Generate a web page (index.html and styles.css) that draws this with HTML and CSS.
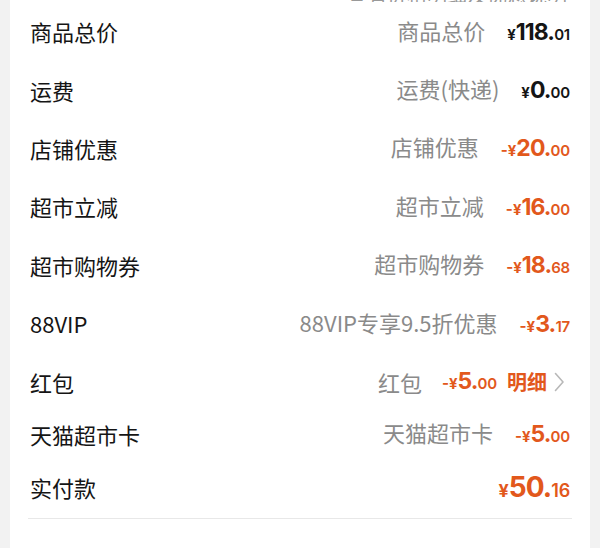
FILE: index.html
```html
<!DOCTYPE html>
<html lang="zh-CN">
<head>
<meta charset="utf-8">
<title>订单金额明细</title>
<link rel="stylesheet" href="styles.css">
</head>
<body>
<div class="card">
  <div class="prev"><span class="prev-text">查看价格明细及优惠说明</span></div>

  <div class="row">
    <span class="label">商品总价</span>
    <span class="right"><span class="desc">商品总价</span><span class="price"><span class="yen">¥</span><span class="int">118.</span><span class="dec">01</span></span></span>
  </div>
  <div class="row">
    <span class="label">运费</span>
    <span class="right"><span class="desc">运费(快递)</span><span class="price"><span class="yen">¥</span><span class="int">0.</span><span class="dec">00</span></span></span>
  </div>
  <div class="row">
    <span class="label">店铺优惠</span>
    <span class="right"><span class="desc">店铺优惠</span><span class="price orange"><span class="sign">-</span><span class="yen">¥</span><span class="int">20.</span><span class="dec">00</span></span></span>
  </div>
  <div class="row">
    <span class="label">超市立减</span>
    <span class="right"><span class="desc">超市立减</span><span class="price orange"><span class="sign">-</span><span class="yen">¥</span><span class="int">16.</span><span class="dec">00</span></span></span>
  </div>
  <div class="row">
    <span class="label">超市购物券</span>
    <span class="right"><span class="desc">超市购物券</span><span class="price orange"><span class="sign">-</span><span class="yen">¥</span><span class="int">18.</span><span class="dec">68</span></span></span>
  </div>
  <div class="row">
    <span class="label">88VIP</span>
    <span class="right"><span class="desc">88VIP专享9.5折优惠</span><span class="price orange"><span class="sign">-</span><span class="yen">¥</span><span class="int">3.</span><span class="dec">17</span></span></span>
  </div>
  <div class="row">
    <span class="label">红包</span>
    <span class="right link"><span class="desc">红包</span><span class="price orange"><span class="sign">-</span><span class="yen">¥</span><span class="int">5.</span><span class="dec">00</span></span><span class="detail">明细</span><svg class="chev" width="15" height="20" viewBox="0 0 15 20"><polyline points="4.5,1.5 12,10 4.5,18.5" fill="none" stroke="#b8b8b8" stroke-width="1.6" stroke-linecap="round" stroke-linejoin="round"/></svg></span>
  </div>
  <div class="row short">
    <span class="label">天猫超市卡</span>
    <span class="right"><span class="desc">天猫超市卡</span><span class="price orange"><span class="sign">-</span><span class="yen">¥</span><span class="int">5.</span><span class="dec">00</span></span></span>
  </div>
  <div class="row total">
    <span class="label">实付款</span>
    <span class="right"><span class="price orange big"><span class="yen">¥</span><span class="int">50.</span><span class="dec">16</span></span></span>
  </div>
  <div class="divider"></div>
  <div class="after"></div>
</div>
</body>
</html>
```

FILE: styles.css
```css
html, body {
  margin: 0;
  padding: 0;
}
body {
  background: #f2f2f2;
  font-family: "Noto Sans CJK SC", "Noto Sans", sans-serif;
  color: #1a1a1a;
}
.card {
  margin: 0 10px;
  background: #ffffff;
  min-height: 548px;
  padding: 0 20px;
  box-sizing: border-box;
}
.prev {
  height: 2px;
  overflow: hidden;
  display: flex;
  justify-content: flex-end;
  align-items: flex-end;
  padding-right: 3px;
}
.prev-text {
  font-size: 20px;
  line-height: 14px;
  color: #999999;
  white-space: nowrap;
}
.row {
  height: 58.4px;
  display: flex;
  align-items: center;
  justify-content: space-between;
}
.row.short {
  height: 46.4px;
}
.row.total {
  height: 60.6px;
}
.label {
  font-size: 22px;
  line-height: 1;
  color: #151515;
}
.right {
  display: flex;
  align-items: baseline;
  gap: 22px;
}
.desc {
  font-size: 22px;
  line-height: 1;
  color: #8a8a8a;
}
.price {
  font-family: "Inter", "Roboto", sans-serif;
  font-weight: 700;
  color: #151515;
  white-space: nowrap;
  line-height: 1;
}
.price.orange {
  color: #e2581c;
}
.sign {
  font-size: 15px;
}
.yen {
  font-size: 15px;
}
.int {
  font-size: 23px;
  letter-spacing: -0.9px;
}
.dec {
  font-size: 15px;
  font-weight: 600;
  letter-spacing: -0.2px;
}
.big .yen {
  font-size: 18px;
}
.big .int {
  font-size: 28px;
}
.big .dec {
  font-size: 18px;
}
.link {
  gap: 0;
  align-items: center;
}
.link .desc {
  margin-right: 20px;
}
.detail {
  font-size: 20px;
  font-weight: 700;
  color: #e2581c;
  margin-left: 10px;
  line-height: 1;
}
.chev {
  display: block;
  margin-left: 4px;
  margin-right: 4px;
}
.divider {
  height: 1px;
  background: #e8e8e8;
  margin: 0 -2px;
}
```
